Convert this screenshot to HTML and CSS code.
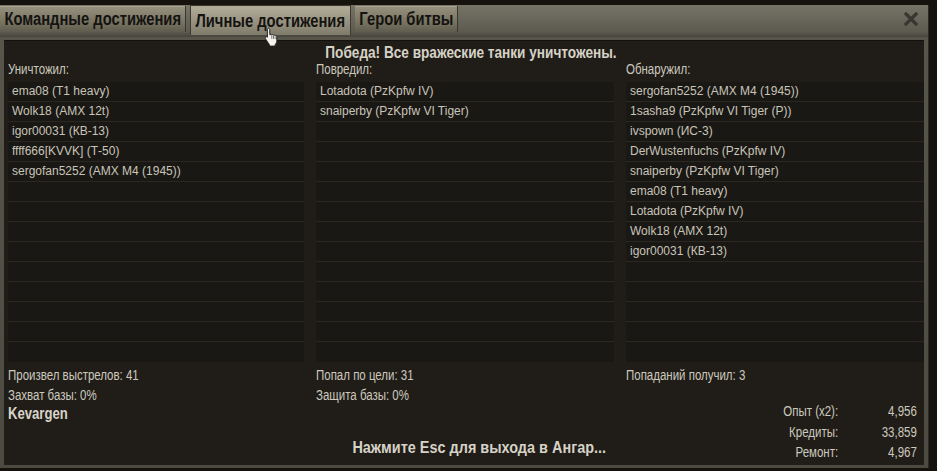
FILE: index.html
```html
<!DOCTYPE html>
<html lang="ru">
<head>
<meta charset="utf-8">
<title>Результаты боя</title>
<link rel="stylesheet" href="styles.css">
</head>
<body>
<div class="window">
  <div class="tabbar">
    <div class="tab tab-team"><span class="tab-text">Командные достижения</span></div>
    <div class="tab tab-personal active"><span class="tab-text">Личные достижения</span>
      <svg class="cursor" width="16" height="19" viewBox="0 0 16 19"><path d="M4.5 1.2c.8 0 1.3.6 1.3 1.4v5.2l.3-.1c.5-.4 1.3-.3 1.7.2.5-.4 1.3-.3 1.7.3.5-.3 1.3-.2 1.6.4l.3-.1c.7-.1 1.3.4 1.4 1.1v3.8c0 1.8-.6 3-1.6 4.2v1.5H5.4v-1.4L1.6 12c-.6-.7-.5-1.6.2-2 .6-.4 1.3-.2 1.6.2V2.6c0-.8.4-1.4 1.1-1.4z" fill="#f4f2ec" stroke="#222" stroke-width="1"/><path d="M7.8 8.5v3.3M9.5 8.8v3M11.1 9.4v2.6" stroke="#555" stroke-width=".8"/></svg>
    </div>
    <div class="tab tab-heroes"><span class="tab-text">Герои битвы</span></div>
    <div class="close"><svg width="14" height="14" viewBox="0 0 14 14"><path d="M2 2l10 10M12 2L2 12" stroke="#39362f" stroke-width="3.2" stroke-linecap="square"/></svg></div>
  </div>
  <div class="panel">
    <div class="headline">Победа! Все вражеские танки уничтожены.</div>
    <div class="columns">
      <div class="col">
        <div class="label">Уничтожил:</div>
        <ul class="list">
          <li>ema08 (T1 heavy)</li>
          <li>Wolk18 (AMX 12t)</li>
          <li>igor00031 (КВ-13)</li>
          <li>ffff666[KVVK] (Т-50)</li>
          <li>sergofan5252 (AMX M4 (1945))</li>
          <li></li><li></li><li></li><li></li><li></li><li></li><li></li><li></li><li></li>
        </ul>
        <div class="stat">Произвел выстрелов: 41</div>
        <div class="stat">Захват базы: 0%</div>
      </div>
      <div class="col">
        <div class="label">Повредил:</div>
        <ul class="list">
          <li>Lotadota (PzKpfw IV)</li>
          <li>snaiperby (PzKpfw VI Tiger)</li>
          <li></li><li></li><li></li><li></li><li></li><li></li><li></li><li></li><li></li><li></li><li></li><li></li>
        </ul>
        <div class="stat">Попал по цели: 31</div>
        <div class="stat">Защита базы: 0%</div>
      </div>
      <div class="col">
        <div class="label">Обнаружил:</div>
        <ul class="list">
          <li>sergofan5252 (AMX M4 (1945))</li>
          <li>1sasha9 (PzKpfw VI Tiger (P))</li>
          <li>ivspown (ИС-3)</li>
          <li>DerWustenfuchs (PzKpfw IV)</li>
          <li>snaiperby (PzKpfw VI Tiger)</li>
          <li>ema08 (T1 heavy)</li>
          <li>Lotadota (PzKpfw IV)</li>
          <li>Wolk18 (AMX 12t)</li>
          <li>igor00031 (КВ-13)</li>
          <li></li><li></li><li></li><li></li><li></li>
        </ul>
        <div class="stat">Попаданий получил: 3</div>
        <div class="stat"></div>
      </div>
    </div>
    <div class="footer">
      <div class="player">Kevargen</div>
      <div class="esc">Нажмите Esc для выхода в Ангар...</div>
      <dl class="rewards">
        <dt>Опыт (x2):</dt><dd>4,956</dd>
        <dt>Кредиты:</dt><dd>33,859</dd>
        <dt>Ремонт:</dt><dd>4,967</dd>
      </dl>
    </div>
  </div>
</div>
</body>
</html>
```
FILE: styles.css
```css
* { box-sizing: border-box; }
html, body { margin: 0; padding: 0; }
body {
  width: 937px;
  height: 471px;
  overflow: hidden;
  background: #16130f;
  font-family: "Liberation Sans", Arial, sans-serif;
  color: #c9c5b9;
}
.window {
  margin-top: 5px;
  width: 929px;
  height: 463px;
  background: linear-gradient(#6a675b 0px, #58554b 30px, #4d4a42 100%);
  display: flex;
  flex-direction: column;
  border-right: 1px solid #2b2924;
}
.tabbar {
  height: 32px;
  display: flex;
  align-items: flex-start;
  gap: 4px;
  padding-top: 1px;
  background: linear-gradient(#767367, #5c594f 85%, #47443c);
  position: relative;
}
.tab {
  position: relative;
  height: 26px;
  display: flex;
  justify-content: center;
  align-items: center;
  background: linear-gradient(#96927f, #76725f 65%, #5f5c50);
  border-right: 1px solid #3a372f;
  box-shadow: inset 0 1px 0 #aaa592;
}
.tab-team { width: 186px; }
.tab-personal { width: 161px; }
.tab-heroes { width: 103px; }
.tab-text {
  display: inline-block;
  white-space: nowrap;
  font-weight: bold;
  font-size: 18px;
  line-height: 26px;
  color: #141311;
  transform: scaleX(0.82);
  transform-origin: center;
}
.tab.active {
  height: 30px;
  margin-top: -1px;
  background: linear-gradient(#b3ae99, #979280 55%, #7f7b6a);
  border: 1px solid #3d3a32;
  border-bottom: none;
}
.cursor {
  position: absolute;
  left: 73px;
  top: 21px;
}
.close {
  position: absolute;
  right: 10px;
  top: 7px;
  width: 14px;
  height: 14px;
}
.close svg { display: block; }
.panel {
  margin: 3px 4px 3px 4px;
  flex: 1;
  background: #201d19;
  box-shadow: inset 0 1px 0 #121110;
  display: flex;
  flex-direction: column;
}
.headline {
  height: 23px;
  padding-top: 3px;
  padding-left: 17px;
  text-align: center;
  font-weight: bold;
  font-size: 16.6px;
  color: #d6d2c6;
  transform: scaleX(0.82);
  transform-origin: center;
}
.columns {
  display: grid;
  grid-template-columns: 296px 298px 1fr;
  column-gap: 12px;
  padding-left: 4px;
}
.label, .stat {
  font-size: 14px;
  height: 20px;
  line-height: 20px;
  color: #cdc9bd;
  white-space: nowrap;
  transform: scaleX(0.82);
  transform-origin: left;
}
.label { height: 19px; line-height: 13px; }
.list + .stat { margin-top: 3px; }
.list {
  list-style: none;
  margin: 0;
  padding: 0;
  background: #1a1815;
}
.list li {
  height: 20px;
  line-height: 19px;
  padding-left: 4px;
  font-size: 12px;
  color: #c8c4b8;
  border-bottom: 1px solid #2b2822;
  white-space: nowrap;
}
.list li:last-child { border-bottom: none; }
.footer {
  flex: 1;
  display: grid;
  grid-template-columns: 1fr auto 1fr;
  padding: 0 7px 0 4px;
}
.player {
  margin-top: 0;
  font-weight: bold;
  font-size: 16px;
  color: #d8d4c8;
  transform: scaleX(0.82);
  transform-origin: left;
}
.esc {
  align-self: end;
  margin-left: 33px;
  padding-bottom: 7px;
  white-space: nowrap;
  font-weight: bold;
  font-size: 17px;
  color: #d6d2c6;
  transform: scaleX(0.85);
  transform-origin: center;
}
.rewards {
  justify-self: end;
  margin: -4px 0 0 0;
  display: grid;
  grid-template-columns: auto 96px;
  grid-auto-rows: 20.5px;
  align-content: start;
  font-size: 14px;
  line-height: 20px;
  color: #cdc9bd;
  white-space: nowrap;
  transform: scaleX(0.82);
  transform-origin: right;
}
.rewards dt, .rewards dd { margin: 0; text-align: right; }
```
